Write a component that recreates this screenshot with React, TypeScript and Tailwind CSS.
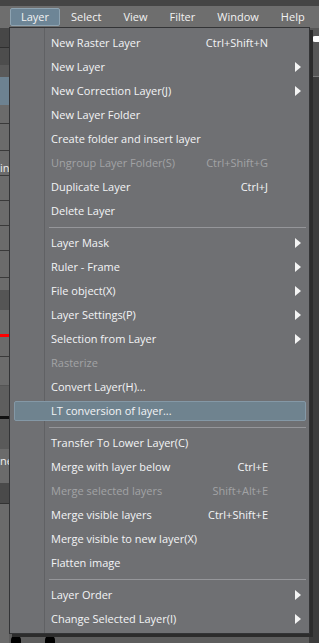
type Item =
  | { kind: "sep" }
  | { kind: "item"; label: string; shortcut?: string; sub?: boolean; disabled?: boolean; active?: boolean };

const items: Item[] = [
  { kind: "item", label: "New Raster Layer", shortcut: "Ctrl+Shift+N" },
  { kind: "item", label: "New Layer", sub: true },
  { kind: "item", label: "New Correction Layer(J)", sub: true },
  { kind: "item", label: "New Layer Folder" },
  { kind: "item", label: "Create folder and insert layer" },
  { kind: "item", label: "Ungroup Layer Folder(S)", shortcut: "Ctrl+Shift+G", disabled: true },
  { kind: "item", label: "Duplicate Layer", shortcut: "Ctrl+J" },
  { kind: "item", label: "Delete Layer" },
  { kind: "sep" },
  { kind: "item", label: "Layer Mask", sub: true },
  { kind: "item", label: "Ruler - Frame", sub: true },
  { kind: "item", label: "File object(X)", sub: true },
  { kind: "item", label: "Layer Settings(P)", sub: true },
  { kind: "item", label: "Selection from Layer", sub: true },
  { kind: "item", label: "Rasterize", disabled: true },
  { kind: "item", label: "Convert Layer(H)..." },
  { kind: "item", label: "LT conversion of layer...", active: true },
  { kind: "sep" },
  { kind: "item", label: "Transfer To Lower Layer(C)" },
  { kind: "item", label: "Merge with layer below", shortcut: "Ctrl+E" },
  { kind: "item", label: "Merge selected layers", shortcut: "Shift+Alt+E", disabled: true },
  { kind: "item", label: "Merge visible layers", shortcut: "Ctrl+Shift+E" },
  { kind: "item", label: "Merge visible to new layer(X)" },
  { kind: "item", label: "Flatten image" },
  { kind: "sep" },
  { kind: "item", label: "Layer Order", sub: true },
  { kind: "item", label: "Change Selected Layer(I)", sub: true },
];

const menus = ["Layer", "Select", "View", "Filter", "Window", "Help"];

function Arrow() {
  return (
    <svg width="6" height="10" viewBox="0 0 6 10" className="block">
      <polygon points="0,0 6,5 0,10" fill="#f4f4f4" />
    </svg>
  );
}

function MenuRow({ item }: { item: Extract<Item, { kind: "item" }> }) {
  const color = item.disabled ? "text-[#a2a3a5]" : "text-[#f3f4f6]";
  return (
    <div className="relative flex h-[24px] items-center">
      {item.active && (
        <div className="absolute inset-y-[2px] left-[4px] right-[3px] rounded-[2px] border border-[#8498a6] bg-[#6f838f]" />
      )}
      <span className={`relative flex-1 pl-[41px] ${color}`}>{item.label}</span>
      {item.shortcut && <span className={`relative ${color}`}>{item.shortcut}</span>}
      <div className="relative flex w-[41px] justify-end pr-[8px]">{item.sub && <Arrow />}</div>
    </div>
  );
}

function LeftStrip() {
  return (
    <div className="flex w-[9px] flex-col overflow-hidden bg-[#6b6b6b]">
      <div className="h-[19px] bg-[#474747]" />
      <div className="h-[1px] bg-[#2f2f2f]" />
      <div className="h-[17px] bg-[#4d4d4d]" />
      <div className="h-[12px] bg-[#5a5a5a]" />
      <div className="h-[28px] bg-[#6d8291]" />
      <div className="h-[18px]" />
      <div className="h-[1px] bg-[#3a3a3a]" />
      <div className="h-[26px]" />
      <div className="h-[1px] bg-[#3a3a3a]" />
      <div className="h-[24px] text-[11px] leading-[34px] text-[#eee]">in</div>
      <div className="h-[1px] bg-[#3a3a3a]" />
      <div className="h-[24px]" />
      <div className="h-[1px] bg-[#3a3a3a]" />
      <div className="h-[24px]" />
      <div className="h-[1px] bg-[#3a3a3a]" />
      <div className="h-[24px]" />
      <div className="h-[1px] bg-[#3a3a3a]" />
      <div className="h-[26px]" />
      <div className="h-[1px] bg-[#3a3a3a]" />
      <div className="h-[12px]" />
      <div className="h-[20px] bg-[#555555]" />
      <div className="h-[24px]" />
      <div className="h-[3px] bg-[#ff0000]" />
      <div className="h-[19px]" />
      <div className="h-[1px] bg-[#3a3a3a]" />
      <div className="h-[28px]" />
      <div className="h-[1px] bg-[#555]" />
      <div className="h-[30px] bg-[#5e5e5e]" />
      <div className="h-[3px] bg-[#111]" />
      <div className="h-[30px] bg-[#5a5a5a]" />
      <div className="h-[24px] text-[11px] leading-[24px] text-[#eee]">ne</div>
      <div className="h-[10px]" />
      <div className="h-[20px] bg-[#4a4a4a]" />
      <div className="h-[1px] bg-[#333]" />
      <div className="flex-1" />
    </div>
  );
}

export default function App() {
  return (
    <div
      className="relative flex h-[643px] w-[319px] flex-col overflow-hidden bg-[#6b6b6b] text-[11px]"
      style={{ fontFamily: '"Open Sans", "Liberation Sans", sans-serif' }}
    >
      <div className="h-[6px] bg-[#454545]" />
      <div className="flex h-[22px] items-start bg-[#6e6e6e] pl-[10px] pt-[2px]">
        {menus.map((m) => (
          <div
            key={m}
            className={`flex h-[18px] items-center px-[10px] text-[#f2f2f2] ${
              m === "Layer" ? "rounded-[2px] border border-[#8ea3b1] bg-[#6d8596]" : "border border-transparent"
            }`}
          >
            {m}
          </div>
        ))}
      </div>
      <div className="flex flex-1">
        <LeftStrip />
        <div className="flex flex-1 flex-col">
          <div className="flex-1" />
          <div className="flex h-[10px] items-end gap-[24px] bg-[#5e5e5e] pl-[2px]">
            <div className="h-[8px] w-[10px] rounded-t-full bg-black" />
            <div className="h-[8px] w-[10px] rounded-t-full bg-black" />
          </div>
        </div>
        <div className="flex w-[10px] flex-col">
          <div className="h-[48px] bg-[#575757] pl-[3px] pt-[8px]">
            <div className="h-[6px] w-[7px] rounded-l-full bg-white" />
          </div>
          <div className="h-[1px] bg-[#7a7a7a]" />
          <div className="flex-1 bg-[#3c3c3c]" />
        </div>
      </div>

      <div className="absolute left-[9px] top-[27px] flex h-[607px] w-[301px] flex-col border border-[#333436] bg-[#6f7073] pb-[2px] pt-[3px] shadow-[3px_3px_0_#2c2c2c]">
        <div className="absolute bottom-0 left-[34px] top-0 w-[1px] bg-[#606164]" />
        {items.map((it, i) =>
          it.kind === "sep" ? (
            <div key={i} className="flex h-[8px] items-center pl-[39px] pr-[3px]">
              <div className="h-[1px] w-full bg-[#95969a]" />
            </div>
          ) : (
            <MenuRow key={i} item={it} />
          )
        )}
      </div>
    </div>
  );
}
